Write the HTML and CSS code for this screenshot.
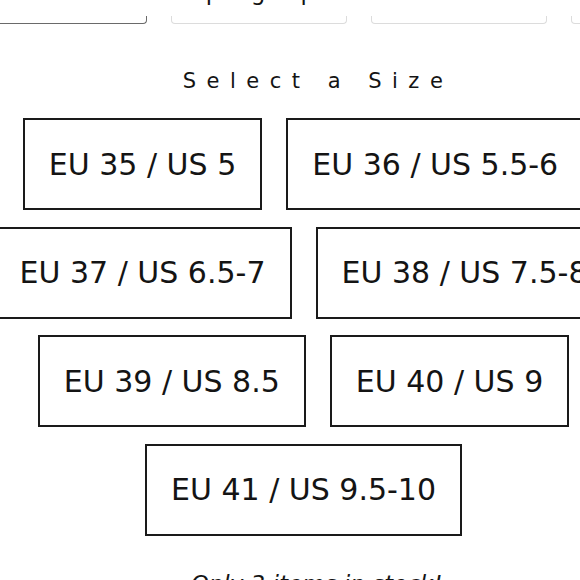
FILE: index.html
```html
<!DOCTYPE html>
<html lang="en">
<head>
<meta charset="utf-8">
<title>Select a Size</title>
<link rel="stylesheet" href="styles.css">
</head>
<body>
<div class="page">
  <div class="site">springstepshoes.com</div>
  <div class="tabs">
    <div class="tab tab-active"></div>
    <div class="tab"></div>
    <div class="tab"></div>
    <div class="tab"></div>
  </div>
  <h2 class="heading">Select a Size</h2>
  <div class="sizes">
    <div class="row">
      <div class="size">EU 35 / US 5</div>
      <div class="size">EU 36 / US 5.5-6</div>
    </div>
    <div class="row">
      <div class="size">EU 37 / US 6.5-7</div>
      <div class="size">EU 38 / US 7.5-8</div>
    </div>
    <div class="row">
      <div class="size">EU 39 / US 8.5</div>
      <div class="size">EU 40 / US 9</div>
    </div>
    <div class="row">
      <div class="size">EU 41 / US 9.5-10</div>
    </div>
  </div>
  <p class="stock">Only 3 items in stock!</p>
</div>
</body>
</html>
```
FILE: styles.css
```css
html, body {
  margin: 0;
  padding: 0;
  overflow: hidden;
  background: #ffffff;
}
body {
  width: 580px;
  height: 580px;
  font-family: "DejaVu Sans", "Liberation Sans", sans-serif;
  color: #141414;
}
.page {
  width: 580px;
}
.site {
  margin-top: -19px;
  padding-left: 52px;
  font-size: 23px;
  line-height: 23px;
  text-align: center;
  white-space: nowrap;
}
.tabs {
  display: flex;
  gap: 24px;
  margin-top: 12px;
  margin-left: -29px;
}
.tab {
  flex: 0 0 176px;
  height: 8px;
  box-sizing: border-box;
  border: 1px solid #dcdcdc;
  border-top: none;
  border-radius: 0 0 4px 4px;
}
.tab-active {
  border-color: #6a6a6a;
}
.heading {
  margin: 45px 0 0 0;
  padding-left: 56px;
  font-size: 21px;
  line-height: 24px;
  font-weight: normal;
  letter-spacing: 10.5px;
  text-align: center;
  white-space: nowrap;
}
.sizes {
  width: 800px;
  margin-left: -96.5px;
  margin-top: 25px;
  display: flex;
  flex-direction: column;
  gap: 16.5px;
}
.row {
  display: flex;
  justify-content: center;
  gap: 24px;
}
.size {
  box-sizing: border-box;
  height: 92px;
  padding: 0 24px;
  border: 2px solid #1a1a1a;
  display: flex;
  align-items: center;
  font-size: 30px;
  white-space: nowrap;
}
.stock {
  margin: 34.5px 0 0 0;
  padding-left: 53px;
  font-size: 23px;
  line-height: 28px;
  font-style: italic;
  text-align: center;
  white-space: nowrap;
}
```
